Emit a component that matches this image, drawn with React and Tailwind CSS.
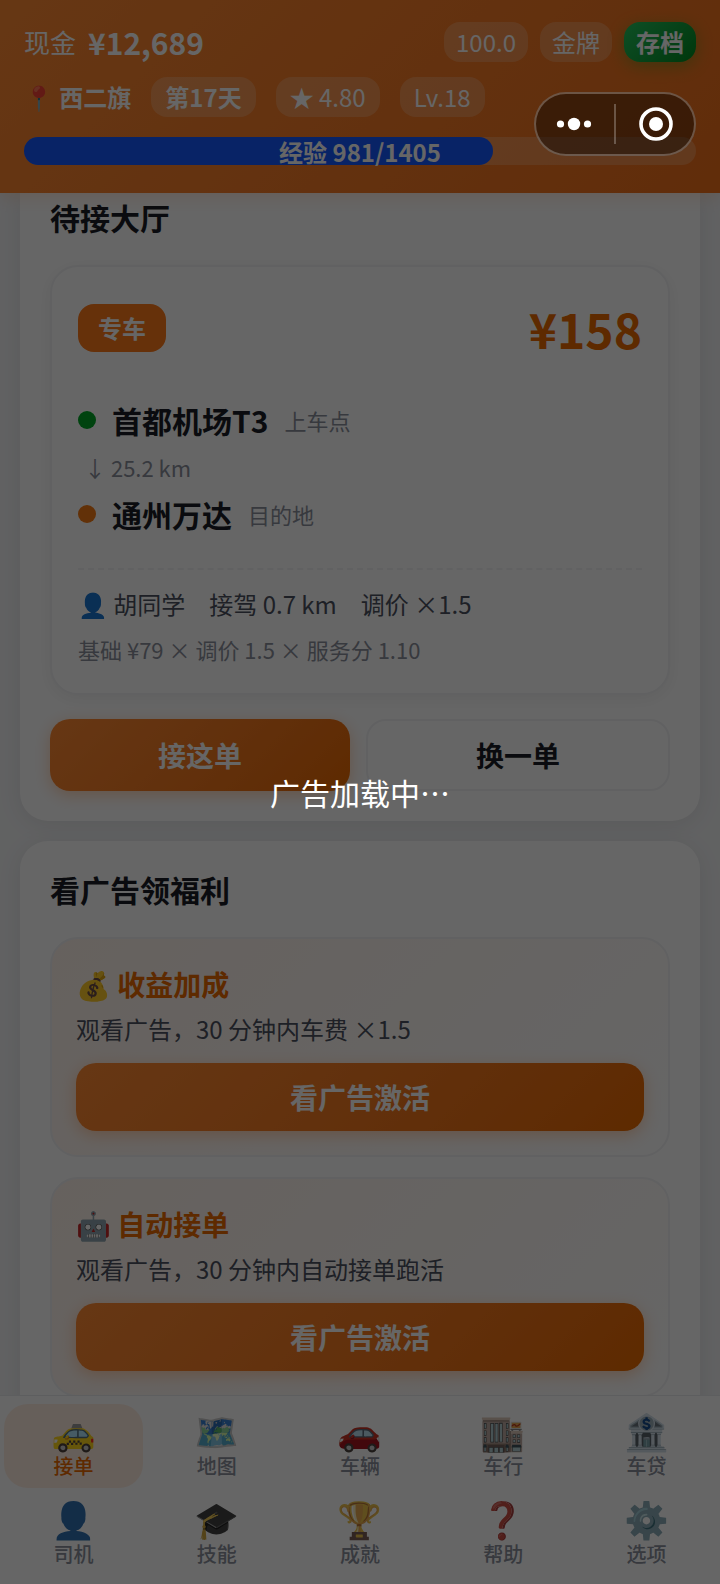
import { useState } from "react";
import clsx from "clsx";

const tabs = [
  { id: "orders", icon: "🚕", label: "接单" },
  { id: "map", icon: "🗺️", label: "地图" },
  { id: "cars", icon: "🚗", label: "车辆" },
  { id: "dealer", icon: "🏬", label: "车行" },
  { id: "loan", icon: "🏦", label: "车贷" },
  { id: "driver", icon: "👤", label: "司机" },
  { id: "skills", icon: "🎓", label: "技能" },
  { id: "awards", icon: "🏆", label: "成就" },
  { id: "help", icon: "❓", label: "帮助" },
  { id: "options", icon: "⚙️", label: "选项" },
];

const rewards = [
  { icon: "💰", title: "收益加成", text: "观看广告，30 分钟内车费 ×1.5" },
  { icon: "🤖", title: "自动接单", text: "观看广告，30 分钟内自动接单跑活" },
];

const exp = { current: 981, next: 1405 };

function Pill({ children, className }) {
  return (
    <span className={clsx("rounded-2xl bg-white/20 text-2xl leading-10 whitespace-nowrap", className)}>
      {children}
    </span>
  );
}

function Header() {
  return (
    <header className="relative z-10 bg-linear-135 from-[#ff8a33] to-[#f2701a] px-6 pt-[22px] pb-7 text-white shadow-[0_4px_16px_rgba(255,107,0,0.15)]">
      <div className="flex items-center justify-between">
        <p className="flex h-10 items-center gap-3 text-[26px] leading-10">
          现金 <strong className="text-[30px] font-bold">¥12,689</strong>
        </p>
        <div className="flex gap-3">
          <Pill className="px-3">100.0</Pill>
          <Pill className="px-3">金牌</Pill>
          <button className="rounded-2xl bg-linear-135 from-[#22c55e] to-[#008a1c] px-3 text-2xl leading-10 font-bold shadow-[0_4px_16px_rgba(0,160,40,0.35)]">
            存档
          </button>
        </div>
      </div>

      <div className="mt-[15px] flex gap-5">
        <span className="text-2xl leading-10 font-bold">📍 西二旗</span>
        <Pill className="px-3.5 font-bold">第17天</Pill>
        <Pill className="px-3.5">★ 4.80</Pill>
        <Pill className="px-3.5">Lv.18</Pill>
      </div>

      <div className="relative mt-5 h-7 rounded-full bg-white/20">
        <div
          className="h-full rounded-full bg-[#1457ff]"
          style={{ width: `${(exp.current / exp.next) * 100}%` }}
        />
        <span className="absolute inset-0 text-center text-2xl leading-[30px] font-bold">
          经验 {exp.current}/{exp.next}
        </span>
      </div>
    </header>
  );
}

function Stop({ name, hint, dot }) {
  return (
    <div className="flex items-center gap-4 leading-11">
      <span className={clsx("size-[18px] rounded-full", dot)} />
      <span className="text-[30px] font-bold text-[#1a1d26]">{name}</span>
      <span className="text-[22px] text-[#8b909c]">{hint}</span>
    </div>
  );
}

function OrderHall() {
  return (
    <section className="rounded-b-[28px] bg-white px-[30px] pt-0.5 pb-[30px] shadow-[0_4px_24px_rgba(0,0,0,0.08)]">
      <h2 className="mb-[26px] text-[30px] leading-11 font-bold text-[#1a1d26]">待接大厅</h2>

      <article className="rounded-[28px] border-2 border-[#f2f3f5] bg-white p-[26px] pb-7 shadow-[0_4px_16px_rgba(0,0,0,0.06)]">
        <div className="flex items-center justify-between">
          <span className="rounded-2xl bg-[#ff7a1a] px-5 text-2xl leading-12 font-bold text-white">专车</span>
          <span className="text-5xl leading-[70px] font-bold text-[#eb6a00]">¥158</span>
        </div>

        <div className="mt-[35px]">
          <Stop name="首都机场T3" hint="上车点" dot="bg-[#00a826]" />
          <p className="my-2.5 pl-1.5 text-[22px] leading-[30px] text-[#8b909c]">↓ 25.2 km</p>
          <Stop name="通州万达" hint="目的地" dot="bg-[#f57a14]" />
        </div>

        <div className="mt-8 border-t-2 border-dashed border-[#f2f3f5] pt-4">
          <div className="flex gap-6 text-2xl leading-9 text-[#4b5160]">
            <span>👤 胡同学</span>
            <span>接驾 0.7 km</span>
            <span>调价 ×1.5</span>
          </div>
          <p className="mt-[11px] text-[22px] leading-8 text-[#8b909c]">基础 ¥79 × 调价 1.5 × 服务分 1.10</p>
        </div>
      </article>

      <div className="mt-6 flex gap-4">
        <button className="h-[72px] flex-auto rounded-[20px] bg-linear-135 from-[#ff8a33] to-[#eb6a00] text-[28px] font-bold text-white shadow-[0_4px_16px_rgba(255,107,0,0.3)]">
          接这单
        </button>
        <button className="h-[72px] flex-auto rounded-[20px] border-2 border-[#f2f3f5] bg-white text-[28px] font-bold text-[#1a1d26]">
          换一单
        </button>
      </div>
    </section>
  );
}

function RewardCard({ icon, title, text }) {
  return (
    <article className="rounded-[28px] border-2 border-[#f2f3f5] bg-linear-135 from-[#fff3eb] to-white p-6">
      <h3 className="text-[28px] leading-[42px] font-bold text-[#eb6a00]">
        {icon} {title}
      </h3>
      <p className="mt-1.5 text-2xl leading-9 text-[#4b5160]">{text}</p>
      <button className="mt-4 h-[68px] w-full rounded-[20px] bg-linear-135 from-[#ff8a33] to-[#eb6a00] text-[28px] font-bold text-white shadow-[0_4px_16px_rgba(255,107,0,0.3)]">
        看广告激活
      </button>
    </article>
  );
}

function TabBar() {
  const [active, setActive] = useState("orders");

  return (
    <nav className="relative z-10 grid grid-cols-5 gap-1 border-t border-[#e8eaed] bg-white px-1 py-2">
      {tabs.map((tab) => (
        <button
          key={tab.id}
          onClick={() => setActive(tab.id)}
          className={clsx(
            "flex flex-col items-center gap-1.5 rounded-3xl py-2",
            active === tab.id ? "bg-[#ffeee2] text-[#eb6a00]" : "text-[#8b909c]"
          )}
        >
          <span className={clsx("text-4xl leading-[34px]", active !== tab.id && "grayscale-[30%]")}>
            {tab.icon}
          </span>
          <span className="text-xl leading-7 font-medium">{tab.label}</span>
        </button>
      ))}
    </nav>
  );
}

// Mini-program menu, stays above the loading mask
function Capsule() {
  return (
    <div className="absolute top-[92px] right-6 z-30 flex h-16 w-[162px] items-center rounded-full border-2 border-white/25 bg-black/40">
      <button aria-label="更多" className="flex flex-1 justify-center pr-0.5">
        <svg width="36" height="14" viewBox="0 0 36 14" fill="#fff">
          <circle cx="4.5" cy="7" r="3.6" />
          <circle cx="18" cy="7" r="6.2" />
          <circle cx="31.5" cy="7" r="3.6" />
        </svg>
      </button>
      <span className="h-10 w-0.5 bg-white/25" />
      <button aria-label="关闭" className="flex flex-1 justify-center pl-0.5">
        <svg width="36" height="36" viewBox="0 0 36 36" fill="none">
          <circle cx="18" cy="18" r="15" stroke="#fff" strokeWidth="3.6" />
          <circle cx="18" cy="18" r="7" fill="#fff" />
        </svg>
      </button>
    </div>
  );
}

export default function App() {
  return (
    <div className="relative flex h-screen flex-col overflow-hidden bg-[#f3f4f6] font-['Noto_Sans_CJK_SC','Noto_Color_Emoji',sans-serif]">
      <Header />

      <main className="flex min-h-0 flex-1 flex-col gap-5 overflow-hidden px-5">
        <OrderHall />
        <section className="rounded-[28px] bg-white px-[30px] pt-[26px] pb-[30px] shadow-[0_4px_24px_rgba(0,0,0,0.08)]">
          <h2 className="mb-[26px] text-[30px] leading-11 font-bold text-[#1a1d26]">看广告领福利</h2>
          <div className="flex flex-col gap-5">
            {rewards.map((r) => (
              <RewardCard key={r.title} {...r} />
            ))}
          </div>
        </section>
      </main>

      <TabBar />

      <div role="status" className="absolute inset-0 z-20 flex items-center justify-center bg-black/60 text-[30px] text-white">
        广告加载中…
      </div>
      <Capsule />
    </div>
  );
}
